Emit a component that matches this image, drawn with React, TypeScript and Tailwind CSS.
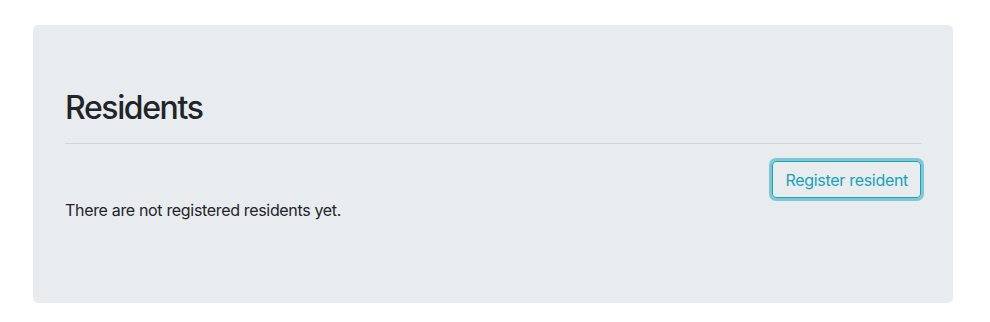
const FONT = "font-['Inter','Noto_Sans',sans-serif]"

export default function App() {
  return (
    <div className={`min-h-[322px] bg-white pt-[25px] pl-[33px] ${FONT} text-[#212529]`}>
      <div className="w-[920px] rounded-[5px] bg-[#e9ecef] px-8 pt-16 pb-[81px]">
        <h2 className="text-[32px] font-medium leading-[38px] tracking-[-1.4px]">Residents</h2>
        <hr className="mt-4 mb-[17px] border-t border-black/10" />
        <div className="flex justify-end">
          <button
            type="button"
            className="h-[37px] rounded-[4px] border border-[#17a2b8] px-3 text-base leading-6 tracking-[-0.3px] text-[#17a2b8] shadow-[0_0_0_3px_rgba(23,162,184,0.5)]"
          >
            Register resident
          </button>
        </div>
        <p className="text-base leading-6 tracking-[-0.33px]">There are not registered residents yet.</p>
      </div>
    </div>
  )
}
